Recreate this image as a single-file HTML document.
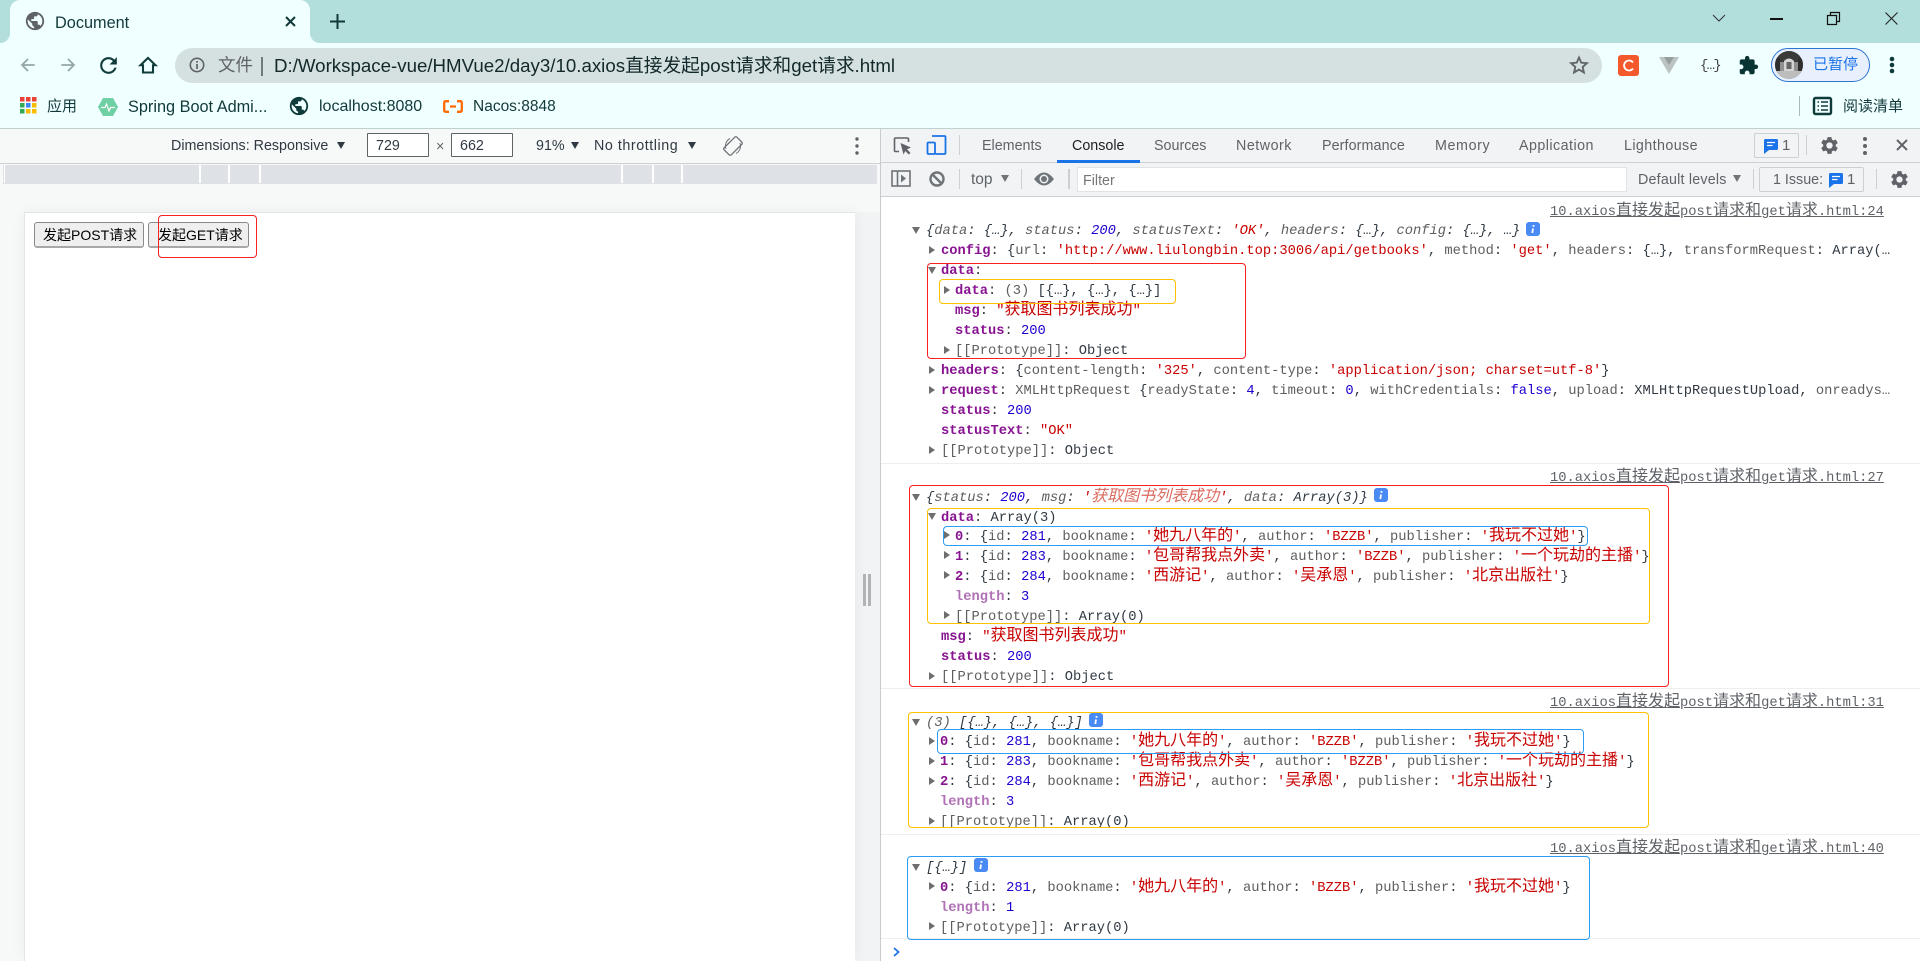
<!DOCTYPE html>
<html lang="zh"><head><meta charset="utf-8"><title>Document</title>
<style>
html,body{margin:0;padding:0;width:1920px;height:961px;overflow:hidden;background:#fff}
body{position:relative;font-family:"Liberation Sans","Noto Sans CJK SC",sans-serif;color:#202124}
.a{position:absolute}
.x{position:absolute;white-space:pre;line-height:20px}
svg{position:absolute;overflow:visible}
.u{font-size:14.3px;color:#5f6368}
.m{position:absolute;white-space:pre;line-height:20px;height:20px;margin-top:2px;font-family:"Liberation Mono","Noto Sans CJK SC",monospace;font-size:13.75px;color:#303942}
.c{font-family:"Noto Sans CJK SC",sans-serif;font-size:16px;line-height:0}
.k{color:#881391;font-weight:bold}
.l{color:#b071b6;font-weight:bold}
.g{color:#5e5e5e}
.s{color:#c80000}
.n{color:#1c00cf}
.o{color:#303942}
.h{font-style:italic}
.src{left:1550px;color:#5f6368;text-decoration:underline}
.tr,.td{position:absolute;width:0;height:0}
.tr{border-left:6px solid #6e6e6e;border-top:4.5px solid transparent;border-bottom:4.5px solid transparent}
.td{border-top:7px solid #6e6e6e;border-left:4.5px solid transparent;border-right:4.5px solid transparent}
.b{position:absolute;box-sizing:border-box;border-radius:4px;border:1.5px solid}
.red{border-color:#f92020}.yel{border-color:#ffc000}.blu{border-color:#2a9df4}
.sep{position:absolute;width:1px;background:#ccd0d2}
.div{position:absolute;left:881px;right:0;height:1px;background:#eeeeee}
</style></head><body>

<!-- tab strip -->
<div class="a" style="left:0;top:0;width:1920px;height:43px;background:#b2dfdb"></div>
<div class="a" style="left:0;top:20px;width:330px;height:23px;background:#f0ffff"></div>
<div class="a" style="left:0;top:0;width:10px;height:43px;background:#b2dfdb;border-bottom-right-radius:10px"></div>
<div class="a" style="left:310px;top:0;width:1610px;height:43px;background:#b2dfdb;border-bottom-left-radius:10px"></div>
<div class="a" style="left:10px;top:0;width:300px;height:43px;background:#f0ffff;border-radius:10px 10px 0 0"></div>
<svg style="left:24px;top:10px" width="22" height="22" viewBox="0 0 24 24"><path fill="#5f6368" d="M12 2C6.48 2 2 6.48 2 12s4.48 10 10 10 10-4.48 10-10S17.52 2 12 2zm-1 17.93c-3.95-.49-7-3.85-7-7.93 0-.62.08-1.21.21-1.79L9 15v1c0 1.1.9 2 2 2v1.93zm6.9-2.54c-.26-.81-1-1.39-1.9-1.39h-1v-3c0-.55-.45-1-1-1H8v-2h2c.55 0 1-.45 1-1V7h2c1.1 0 2-.9 2-2v-.41c2.93 1.19 5 4.06 5 7.41 0 2.08-.8 3.97-2.1 5.39z"/></svg>
<div class="x" style="left:55px;top:13px;font-size:16.3px;color:#12393a">Document</div>
<svg style="left:285px;top:16px" width="11" height="11"><path d="M1 1L10 10M10 1L1 10" stroke="#12393a" stroke-width="2"/></svg>
<svg style="left:330px;top:14px" width="15" height="15"><path d="M7.5 0V15M0 7.5H15" stroke="#12393a" stroke-width="2"/></svg>
<!-- window controls -->
<svg style="left:1712px;top:14px" width="14" height="8"><path d="M1 1L7 7L13 1" fill="none" stroke="#333" stroke-width="1"/></svg>
<div class="a" style="left:1770px;top:18px;width:13px;height:1.5px;background:#111"></div>
<svg style="left:1827px;top:12px" width="13" height="13"><path d="M.5 3.5H9.5V12.5H.5zM3.5 3.5V.5H12.5V9.5H9.5" fill="none" stroke="#111" stroke-width="1.2"/></svg>
<svg style="left:1885px;top:12px" width="13" height="13"><path d="M.5 .5L12.5 12.5M12.5 .5L.5 12.5" fill="none" stroke="#222" stroke-width="1.1"/></svg>

<!-- toolbar -->
<div class="a" style="left:0;top:43px;width:1920px;height:85px;background:#f0ffff"></div>
<div class="a" style="left:0;top:128px;width:1920px;height:1px;background:#bdd1d1"></div>
<svg style="left:19px;top:56px" width="18" height="18" viewBox="0 0 24 24"><path d="M21 12H4M12 4l-8 8 8 8" fill="none" stroke="#92a8a8" stroke-width="2.4"/></svg>
<svg style="left:59px;top:56px" width="18" height="18" viewBox="0 0 24 24"><path d="M3 12H20M12 4l8 8-8 8" fill="none" stroke="#92a8a8" stroke-width="2.4"/></svg>
<svg style="left:95.5px;top:52.5px" width="25" height="25" viewBox="0 0 24 24"><path fill="#0f3b3a" d="M17.65 6.35A7.958 7.958 0 0012 4c-4.42 0-7.99 3.58-7.99 8s3.57 8 7.99 8c3.73 0 6.84-2.55 7.73-6h-2.08A5.99 5.99 0 0112 18c-3.31 0-6-2.69-6-6s2.69-6 6-6c1.66 0 3.14.69 4.22 1.78L13 11h7V4l-2.35 2.35z"/></svg>
<svg style="left:138px;top:55px" width="20" height="20" viewBox="0 0 24 24"><path d="M12 3.5L3 12.3H6V21H18V12.3H21z" fill="none" stroke="#0f3b3a" stroke-width="2.5" stroke-linejoin="miter"/></svg>
<div class="a" style="left:175px;top:48px;width:1427px;height:35px;border-radius:18px;background:#d5e0e0"></div>
<svg style="left:189px;top:57px" width="16" height="16"><circle cx="8" cy="8" r="6.7" fill="none" stroke="#5f6368" stroke-width="1.6"/><path d="M8 7V12M8 4V5.8" stroke="#5f6368" stroke-width="1.7"/></svg>
<div class="x" style="left:218px;top:55px;font-size:17.5px;color:#5f6368">文件</div>
<div class="a" style="left:261px;top:57px;width:2px;height:19px;background:#6f7a7a"></div>
<div class="x" style="left:274px;top:56px;font-size:18.7px;color:#12282a">D:/Workspace-vue/HMVue2/day3/10.axios直接发起post请求和get请求.html</div>
<svg style="left:1569px;top:55px" width="20" height="20" viewBox="0 0 24 24"><path d="M12 3l2.7 6.2 6.8.6-5.1 4.5 1.5 6.7L12 17.5 6.1 21l1.5-6.7L2.5 9.8l6.8-.6z" fill="none" stroke="#5f6368" stroke-width="2.2"/></svg>
<div class="a" style="left:1618px;top:55px;width:21px;height:21px;border-radius:3px;background:#f4592e"></div>
<svg style="left:1622px;top:59px" width="13" height="13"><path d="M11 3.4A5 5 0 1 0 11 9.6" fill="none" stroke="#fff" stroke-width="1.8"/></svg>
<svg style="left:1659px;top:57px" width="20" height="17"><path d="M0 0H20L10 17z" fill="#bcc3c3"/><path d="M5 0H15L10 8z" fill="#979e9e"/></svg>
<div class="x" style="left:1700px;top:56px;font-size:14px;font-family:'Liberation Mono',monospace;letter-spacing:-1.8px;color:#444">{…}</div>
<svg style="left:1738px;top:55px" width="21" height="21" viewBox="0 0 24 24"><path fill="#0a3433" d="M20.5 11H19V7c0-1.1-.9-2-2-2h-4V3.5C13 2.12 11.88 1 10.5 1S8 2.12 8 3.5V5H4c-1.1 0-1.99.9-1.99 2v3.8H3.5c1.49 0 2.7 1.21 2.7 2.7s-1.21 2.7-2.7 2.7H2V20c0 1.1.9 2 2 2h3.8v-1.5c0-1.49 1.21-2.7 2.7-2.7 1.49 0 2.7 1.21 2.7 2.7V22H17c1.1 0 2-.9 2-2v-4h1.5c1.38 0 2.5-1.12 2.5-2.5S21.88 11 20.5 11z"/></svg>
<div class="a" style="left:1771px;top:48px;width:99px;height:34px;box-sizing:border-box;border:1.5px solid #2f74d0;border-radius:17px;background:#e8f0fe"></div>
<svg style="left:1775px;top:51px" width="28" height="28"><defs><clipPath id="av"><circle cx="14" cy="14" r="14"/></clipPath></defs><g clip-path="url(#av)"><rect width="28" height="28" fill="#8f8f8f"/><rect width="28" height="11" fill="#3a3a3a"/><rect x="0" y="7" width="5" height="15" fill="#2f2f2f"/><rect x="23" y="7" width="5" height="15" fill="#2f2f2f"/><path d="M9 20V10Q14 5 19 10V20z" fill="#d4d4d4"/><rect x="11.5" y="11" width="5" height="7" fill="#666"/><rect y="20" width="28" height="8" fill="#bdbdbd"/></g></svg>
<div class="x" style="left:1813px;top:55px;font-size:15px;color:#1a73e8">已暂停</div>
<svg style="left:1888px;top:55px" width="8" height="20"><circle cx="4" cy="4" r="2.3" fill="#0f3b3a"/><circle cx="4" cy="10" r="2.3" fill="#0f3b3a"/><circle cx="4" cy="16" r="2.3" fill="#0f3b3a"/></svg>

<!-- bookmarks -->
<svg style="left:20px;top:97px" width="17" height="17"><g><rect x="0" y="0" width="4.5" height="4.5" fill="#ea4335"/><rect x="6" y="0" width="4.5" height="4.5" fill="#ea4335"/><rect x="12" y="0" width="4.5" height="4.5" fill="#ea4335"/><rect x="0" y="6" width="4.5" height="4.5" fill="#34a853"/><rect x="6" y="6" width="4.5" height="4.5" fill="#4285f4"/><rect x="12" y="6" width="4.5" height="4.5" fill="#fbbc04"/><rect x="0" y="12" width="4.5" height="4.5" fill="#34a853"/><rect x="6" y="12" width="4.5" height="4.5" fill="#fbbc04"/><rect x="12" y="12" width="4.5" height="4.5" fill="#fbbc04"/></g></svg>
<div class="x" style="left:47px;top:97px;font-size:15px;color:#12393a">应用</div>
<svg style="left:98px;top:98px" width="20" height="18"><path d="M5 0H15L20 9L15 18H5L0 9z" fill="#6fd0a4"/><path d="M3 9.5H7L8.5 6L11 13L12.5 9.5H17" fill="none" stroke="#fff" stroke-width="1.2"/></svg>
<div class="x" style="left:128px;top:97px;font-size:16.3px;color:#12393a">Spring Boot Admi...</div>
<svg style="left:288px;top:95px" width="22" height="22" viewBox="0 0 24 24"><path fill="#0f3b3a" d="M12 2C6.48 2 2 6.48 2 12s4.48 10 10 10 10-4.48 10-10S17.52 2 12 2zm-1 17.93c-3.95-.49-7-3.85-7-7.93 0-.62.08-1.21.21-1.79L9 15v1c0 1.1.9 2 2 2v1.93zm6.9-2.54c-.26-.81-1-1.39-1.9-1.39h-1v-3c0-.55-.45-1-1-1H8v-2h2c.55 0 1-.45 1-1V7h2c1.1 0 2-.9 2-2v-.41c2.93 1.19 5 4.06 5 7.41 0 2.08-.8 3.97-2.1 5.39z"/></svg>
<div class="x" style="left:319px;top:97px;font-size:16px;color:#12393a">localhost:8080</div>
<svg style="left:443px;top:100px" width="20" height="13"><path d="M6 1.2H3Q1.2 1.2 1.2 3V10Q1.2 11.8 3 11.8H6M14 1.2H17Q18.800 1.2 18.800 3V10Q18.800 11.8 17 11.8H14M7 6.5H13" fill="none" stroke="#ff6a00" stroke-width="2.3"/></svg>
<div class="x" style="left:473px;top:97px;font-size:15.5px;color:#12393a">Nacos:8848</div>
<div class="a" style="left:1799px;top:96px;width:1px;height:20px;background:#a9b9b9"></div>
<svg style="left:1813px;top:97px" width="19" height="18"><rect x="1" y="1" width="17" height="16" rx="1.5" fill="none" stroke="#0f3b3a" stroke-width="2.4"/><path d="M4.5 5H6M8 5H15M4.5 9H6M8 9H15M4.5 13H6M8 13H15" stroke="#0f3b3a" stroke-width="1.6"/></svg>
<div class="x" style="left:1843px;top:97px;font-size:15px;color:#12393a">阅读清单</div>

<!-- device pane -->
<div class="a" style="left:0;top:129px;width:880px;height:832px;background:#f7f9f9"></div>
<div class="a" style="left:0;top:163px;width:880px;height:1px;background:#cdd1d1"></div>
<div class="x u" style="left:171px;top:136px;color:#303942">Dimensions: Responsive</div>
<div class="td" style="left:337px;top:142px;border-top-color:#303942"></div>
<div class="a" style="left:367px;top:133px;width:62px;height:24px;box-sizing:border-box;border:1px solid #5f6368;background:#fff;border-radius:1px"></div>
<div class="x u" style="left:376px;top:136px;color:#303942">729</div>
<div class="x u" style="left:436px;top:137px;color:#5f6368">×</div>
<div class="a" style="left:451px;top:133px;width:62px;height:24px;box-sizing:border-box;border:1px solid #5f6368;background:#fff;border-radius:1px"></div>
<div class="x u" style="left:460px;top:136px;color:#303942">662</div>
<div class="x u" style="left:536px;top:136px;color:#303942">91%</div>
<div class="td" style="left:571px;top:142px;border-top-color:#303942"></div>
<div class="x u" style="left:594px;top:136px;color:#303942;letter-spacing:.55px">No throttling</div>
<div class="td" style="left:688px;top:142px;border-top-color:#303942"></div>
<svg style="left:723px;top:136px" width="20" height="20"><g transform="rotate(45 10 10)"><rect x="5" y="1" width="10" height="18" rx="1.5" fill="none" stroke="#6e7478" stroke-width="1.3"/></g><path d="M3 13A8.500 8.500 0 0 1 7 2.500M17 7A8.500 8.500 0 0 1 13 17.500" fill="none" stroke="#6e7478" stroke-width="1"/></svg>
<svg style="left:854px;top:136px" width="6" height="20"><circle cx="3" cy="3" r="1.7" fill="#5f6368"/><circle cx="3" cy="10" r="1.7" fill="#5f6368"/><circle cx="3" cy="17" r="1.7" fill="#5f6368"/></svg>
<div class="a" style="left:3px;top:165px;width:874px;height:19px;background:#dee1e6"></div>
<div class="a" style="left:4px;top:165px;width:1px;height:18px;background:#fff"></div>
<div class="a" style="left:199px;top:165px;width:1.5px;height:18px;background:#fff"></div>
<div class="a" style="left:228px;top:165px;width:1.5px;height:18px;background:#fff"></div>
<div class="a" style="left:259px;top:165px;width:1.5px;height:18px;background:#fff"></div>
<div class="a" style="left:621px;top:165px;width:1.5px;height:18px;background:#fff"></div>
<div class="a" style="left:652px;top:165px;width:1.5px;height:18px;background:#fff"></div>
<div class="a" style="left:681px;top:165px;width:1.5px;height:18px;background:#fff"></div>
<div class="a" style="left:855px;top:212px;width:25px;height:749px;background:#f1f3f4"></div>
<div class="a" style="left:24px;top:212px;width:831px;height:749px;background:#fff;box-sizing:border-box;border-top:1px solid #e3e6e6;border-left:1px solid #e3e6e6;box-shadow:0 0 14px rgba(0,0,0,.05)"></div>
<div class="a" style="left:863px;top:574px;width:3px;height:32px;background:#b0b4b5"></div>
<div class="a" style="left:868px;top:574px;width:3px;height:32px;background:#b0b4b5"></div>
<div class="a" style="left:34px;top:222px;width:110px;height:26px;box-sizing:border-box;border:1px solid #8a8a8a;border-bottom:2px solid #a8a8a8;border-radius:3px;background:#efefef"></div>
<div class="x" style="left:43px;top:225px;font-size:14px;color:#000">发起POST请求</div>
<div class="a" style="left:148px;top:222px;width:101px;height:26px;box-sizing:border-box;border:1px solid #8a8a8a;border-bottom:2px solid #a8a8a8;border-radius:3px;background:#efefef"></div>
<div class="x" style="left:158px;top:225px;font-size:14px;color:#000">发起GET请求</div>
<div class="a" style="left:158px;top:215px;width:99px;height:43px;box-sizing:border-box;border:1px solid #f92020;border-radius:4px"></div>

<!-- devtools chrome -->
<div class="a" style="left:880px;top:129px;width:1040px;height:68px;background:#f1f3f4"></div>
<div class="a" style="left:880px;top:129px;width:1px;height:832px;background:#c6cbcb"></div>
<div class="a" style="left:881px;top:162px;width:1039px;height:1px;background:#cdd1d3"></div>
<div class="a" style="left:881px;top:196px;width:1039px;height:1px;background:#cdd1d3"></div>
<svg style="left:893px;top:136px" width="20" height="20"><path d="M6 15.5H2.5Q1.5 15.5 1.5 14.5V3Q1.5 2 2.500 2H14Q15.5 2 15.5 3V6" fill="none" stroke="#5f6368" stroke-width="1.6"/><path d="M7.5 7L18 11.5L14 13.3L17.5 17L15.8 18.5L12.3 15L10.5 18.5z" fill="#5f6368"/></svg>
<svg style="left:926px;top:135px" width="21" height="21"><path d="M6 1H18.5Q19.5 1 19.5 2V18Q19.5 19 18.5 19H9.5" fill="none" stroke="#1a73e8" stroke-width="1.8"/><rect x="1.5" y="7.5" width="7.5" height="11.5" rx="1" fill="none" stroke="#1a73e8" stroke-width="1.8"/></svg>
<div class="sep" style="left:959px;top:135px;height:20px"></div>
<div class="x u" style="left:982px;top:136px">Elements</div>
<div class="x u" style="left:1072px;top:136px;color:#202124">Console</div>
<div class="a" style="left:1057px;top:160px;width:83px;height:3px;background:#1a73e8"></div>
<div class="x u" style="left:1154px;top:136px">Sources</div>
<div class="x u" style="left:1236px;top:136px;letter-spacing:.5px">Network</div>
<div class="x u" style="left:1322px;top:136px;letter-spacing:.1px">Performance</div>
<div class="x u" style="left:1435px;top:136px;letter-spacing:.6px">Memory</div>
<div class="x u" style="left:1519px;top:136px;letter-spacing:.45px">Application</div>
<div class="x u" style="left:1624px;top:136px;letter-spacing:.4px">Lighthouse</div>
<div class="a" style="left:1754px;top:133px;width:45px;height:25px;box-sizing:border-box;border:1px solid #ccd0d2;border-radius:2px"></div>
<svg style="left:1764px;top:139px" width="14" height="15"><path d="M1.5 0H12.5Q14 0 14 1.5V9.5Q14 11 12.5 11H5L0 15V1.5Q0 0 1.5 0z" fill="#1a73e8"/><path d="M3 3.5H11M3 6.5H8.5" stroke="#fff" stroke-width="1.3"/></svg>
<div class="x u" style="left:1782px;top:136px;font-size:15px">1</div>
<div class="sep" style="left:1806px;top:135px;height:20px"></div>
<svg style="left:1818.5px;top:134.5px" width="21" height="21" viewBox="0 0 24 24"><path fill="#5f6368" d="M19.14 12.94c.04-.3.06-.61.06-.94 0-.32-.02-.64-.07-.94l2.03-1.58c.18-.14.23-.41.12-.61l-1.92-3.32c-.12-.22-.37-.29-.59-.22l-2.39.96c-.5-.38-1.03-.7-1.62-.94l-.36-2.54c-.04-.24-.24-.41-.48-.41h-3.84c-.24 0-.43.17-.47.41l-.36 2.54c-.59.24-1.13.57-1.62.94l-2.39-.96c-.22-.08-.47 0-.59.22L2.74 8.87c-.12.21-.08.47.12.61l2.03 1.58c-.05.3-.09.63-.09.94s.02.64.07.94l-2.03 1.58c-.18.14-.23.41-.12.61l1.92 3.32c.12.22.37.29.59.22l2.39-.96c.5.38 1.03.7 1.62.94l.36 2.54c.05.24.24.41.48.41h3.84c.24 0 .44-.17.47-.41l.36-2.54c.59-.24 1.13-.56 1.62-.94l2.39.96c.22.08.47 0 .59-.22l1.92-3.32c.12-.22.07-.47-.12-.61l-2.01-1.58zM12 15.6c-1.98 0-3.6-1.62-3.6-3.6s1.62-3.6 3.6-3.6 3.6 1.62 3.6 3.6-1.62 3.6-3.6 3.6z"/></svg>
<svg style="left:1862px;top:136px" width="6" height="20"><circle cx="3" cy="3" r="2" fill="#5f6368"/><circle cx="3" cy="10" r="2" fill="#5f6368"/><circle cx="3" cy="17" r="2" fill="#5f6368"/></svg>
<svg style="left:1896px;top:139px" width="12" height="12"><path d="M1 1L11 11M11 1L1 11" stroke="#5f6368" stroke-width="2"/></svg>

<svg style="left:891px;top:170px" width="20" height="18"><rect x="1" y="1" width="18" height="15" fill="none" stroke="#6e7478" stroke-width="1.6"/><path d="M6.5 1V16" stroke="#6e7478" stroke-width="1.6"/><path d="M10 4.5L15 8.5L10 12.5z" fill="#6e7478"/></svg>
<svg style="left:929px;top:171px" width="16" height="16"><circle cx="8" cy="8" r="6.5" fill="none" stroke="#6e7478" stroke-width="2.4"/><path d="M3.5 3.5L12.5 12.5" stroke="#6e7478" stroke-width="2.4"/></svg>
<div class="sep" style="left:959px;top:169px;height:20px"></div>
<div class="x u" style="left:971px;top:170px;font-size:15.5px">top</div>
<div class="td" style="left:1001px;top:175px;border-top-color:#6e7478"></div>
<div class="sep" style="left:1021px;top:169px;height:20px"></div>
<svg style="left:1034px;top:172px" width="20" height="14"><path d="M0 7Q10 -6 20 7Q10 20 0 7z" fill="#6e7478"/><circle cx="10" cy="7" r="4.5" fill="#f1f3f4"/><circle cx="10" cy="7" r="3" fill="#6e7478"/></svg>
<div class="sep" style="left:1068px;top:169px;height:20px;width:2px"></div>
<div class="a" style="left:1077px;top:167px;width:550px;height:25px;box-sizing:border-box;background:#fff;border:1px solid #e1e3e4"></div>
<div class="x u" style="left:1083px;top:171px;color:#757575">Filter</div>
<div class="x u" style="left:1638px;top:170px;letter-spacing:.2px">Default levels</div>
<div class="td" style="left:1733px;top:175px;border-top-color:#6e7478"></div>
<div class="sep" style="left:1753px;top:169px;height:20px"></div>
<div class="a" style="left:1759px;top:167px;width:105px;height:25px;box-sizing:border-box;border:1px solid #ccd0d2;border-radius:2px"></div>
<div class="x u" style="left:1773px;top:170px">1 Issue:</div>
<svg style="left:1829px;top:173px" width="14" height="15"><path d="M1.5 0H12.5Q14 0 14 1.5V9.5Q14 11 12.5 11H5L0 15V1.5Q0 0 1.5 0z" fill="#1a73e8"/><path d="M3 3.5H11M3 6.5H8.5" stroke="#fff" stroke-width="1.3"/></svg>
<div class="x u" style="left:1847px;top:170px;font-size:15px">1</div>
<div class="sep" style="left:1876px;top:169px;height:20px"></div>
<svg style="left:1889px;top:168.5px" width="21" height="21" viewBox="0 0 24 24"><path fill="#5f6368" d="M19.14 12.94c.04-.3.06-.61.06-.94 0-.32-.02-.64-.07-.94l2.03-1.58c.18-.14.23-.41.12-.61l-1.92-3.32c-.12-.22-.37-.29-.59-.22l-2.39.96c-.5-.38-1.03-.7-1.62-.94l-.36-2.54c-.04-.24-.24-.41-.48-.41h-3.84c-.24 0-.43.17-.47.41l-.36 2.54c-.59.24-1.13.57-1.62.94l-2.39-.96c-.22-.08-.47 0-.59.22L2.74 8.87c-.12.21-.08.47.12.61l2.03 1.58c-.05.3-.09.63-.09.94s.02.64.07.94l-2.03 1.58c-.18.14-.23.41-.12.61l1.92 3.32c.12.22.37.29.59.22l2.39-.96c.5.38 1.03.7 1.62.94l.36 2.54c.05.24.24.41.48.41h3.84c.24 0 .44-.17.47-.41l.36-2.54c.59-.24 1.13-.56 1.62-.94l2.39.96c.22.08.47 0 .59-.22l1.92-3.32c.12-.22.07-.47-.12-.61l-2.01-1.58zM12 15.6c-1.98 0-3.6-1.62-3.6-3.6s1.62-3.6 3.6-3.6 3.6 1.62 3.6 3.6-1.62 3.6-3.6 3.6z"/></svg>

<!-- console group 1 -->
<div class="m src" style="top:201px">10.axios<span class="c">直接发起</span>post<span class="c">请求和</span>get<span class="c">请求</span>.html:24</div>
<div class="td" style="left:912px;top:227px"></div>
<div class="m h" style="left:926px;top:220px">{<span class="g">data</span>: {…}, <span class="g">status</span>: <span class="n">200</span>, <span class="g">statusText</span>: <span class="s">'OK'</span>, <span class="g">headers</span>: {…}, <span class="g">config</span>: {…}, …}</div>
<svg style="left:1526px;top:222px" width="14" height="14"><rect width="14" height="14" rx="3" fill="#4a8af4"/><path d="M7.5 3V4.8M7 6.5L6.3 11" stroke="#fff" stroke-width="1.8"/></svg>
<div class="tr" style="left:929px;top:246px"></div>
<div class="m" style="left:941px;top:240px"><span class="k">config</span>: {<span class="g">url</span>: <span class="s">'http://www.liulongbin.top:3006/api/getbooks'</span>, <span class="g">method</span>: <span class="s">'get'</span>, <span class="g">headers</span>: {…}, <span class="g">transformRequest</span>: Array(…</div>
<div class="td" style="left:928px;top:267px"></div>
<div class="m" style="left:941px;top:260px"><span class="k">data</span>:</div>
<div class="tr" style="left:944px;top:286px"></div>
<div class="m" style="left:955px;top:280px"><span class="k">data</span>: <span class="g">(3)</span> [{…}, {…}, {…}]</div>
<div class="m" style="left:955px;top:300px"><span class="k">msg</span>: <span class="s">"<span class="c">获取图书列表成功</span>"</span></div>
<div class="m" style="left:955px;top:320px"><span class="k">status</span>: <span class="n">200</span></div>
<div class="tr" style="left:944px;top:346px"></div>
<div class="m" style="left:955px;top:340px"><span class="g">[[Prototype]]</span>: Object</div>
<div class="tr" style="left:929px;top:366px"></div>
<div class="m" style="left:941px;top:360px"><span class="k">headers</span>: {<span class="g">content-length</span>: <span class="s">'325'</span>, <span class="g">content-type</span>: <span class="s">'application/json; charset=utf-8'</span>}</div>
<div class="tr" style="left:929px;top:386px"></div>
<div class="m" style="left:941px;top:380px"><span class="k">request</span>: <span class="g">XMLHttpRequest</span> {<span class="g">readyState</span>: <span class="n">4</span>, <span class="g">timeout</span>: <span class="n">0</span>, <span class="g">withCredentials</span>: <span class="n">false</span>, <span class="g">upload</span>: XMLHttpRequestUpload, <span class="g">onreadys…</span></div>
<div class="m" style="left:941px;top:400px"><span class="k">status</span>: <span class="n">200</span></div>
<div class="m" style="left:941px;top:420px"><span class="k">statusText</span>: <span class="s">"OK"</span></div>
<div class="tr" style="left:929px;top:446px"></div>
<div class="m" style="left:941px;top:440px"><span class="g">[[Prototype]]</span>: Object</div>
<div class="div" style="top:463px"></div>

<!-- console group 2 -->
<div class="m src" style="top:467px">10.axios<span class="c">直接发起</span>post<span class="c">请求和</span>get<span class="c">请求</span>.html:27</div>
<div class="td" style="left:912px;top:494px"></div>
<div class="m h" style="left:926px;top:487px">{<span class="g">status</span>: <span class="n">200</span>, <span class="g">msg</span>: <span class="s">'<span class="c" style="color:#d96a5f">获取图书列表成功</span>'</span>, <span class="g">data</span>: Array(3)}</div>
<svg style="left:1374px;top:488px" width="14" height="14"><rect width="14" height="14" rx="3" fill="#4a8af4"/><path d="M7.5 3V4.8M7 6.5L6.3 11" stroke="#fff" stroke-width="1.8"/></svg>
<div class="td" style="left:928px;top:513px"></div>
<div class="m" style="left:941px;top:507px"><span class="k">data</span>: Array(3)</div>
<div class="tr" style="left:944px;top:531px"></div>
<div class="m" style="left:955px;top:526px"><span class="k">0</span>: {<span class="g">id</span>: <span class="n">281</span>, <span class="g">bookname</span>: <span class="s">'<span class="c">她九八年的</span>'</span>, <span class="g">author</span>: <span class="s">'BZZB'</span>, <span class="g">publisher</span>: <span class="s">'<span class="c">我玩不过她</span>'</span>}</div>
<div class="tr" style="left:944px;top:551px"></div>
<div class="m" style="left:955px;top:546px"><span class="k">1</span>: {<span class="g">id</span>: <span class="n">283</span>, <span class="g">bookname</span>: <span class="s">'<span class="c">包哥帮我点外卖</span>'</span>, <span class="g">author</span>: <span class="s">'BZZB'</span>, <span class="g">publisher</span>: <span class="s">'<span class="c">一个玩劫的主播</span>'</span>}</div>
<div class="tr" style="left:944px;top:571px"></div>
<div class="m" style="left:955px;top:566px"><span class="k">2</span>: {<span class="g">id</span>: <span class="n">284</span>, <span class="g">bookname</span>: <span class="s">'<span class="c">西游记</span>'</span>, <span class="g">author</span>: <span class="s">'<span class="c">吴承恩</span>'</span>, <span class="g">publisher</span>: <span class="s">'<span class="c">北京出版社</span>'</span>}</div>
<div class="m" style="left:955px;top:586px"><span class="l">length</span>: <span class="n">3</span></div>
<div class="tr" style="left:944px;top:611px"></div>
<div class="m" style="left:955px;top:606px"><span class="g">[[Prototype]]</span>: Array(0)</div>
<div class="m" style="left:941px;top:626px"><span class="k">msg</span>: <span class="s">"<span class="c">获取图书列表成功</span>"</span></div>
<div class="m" style="left:941px;top:646px"><span class="k">status</span>: <span class="n">200</span></div>
<div class="tr" style="left:929px;top:672px"></div>
<div class="m" style="left:941px;top:666px"><span class="g">[[Prototype]]</span>: Object</div>
<div class="div" style="top:688px"></div>

<!-- console group 3 -->
<div class="m src" style="top:692px">10.axios<span class="c">直接发起</span>post<span class="c">请求和</span>get<span class="c">请求</span>.html:31</div>
<div class="td" style="left:912px;top:719px"></div>
<div class="m h" style="left:926px;top:712px"><span class="g">(3)</span> [{…}, {…}, {…}]</div>
<svg style="left:1089px;top:713px" width="14" height="14"><rect width="14" height="14" rx="3" fill="#4a8af4"/><path d="M7.5 3V4.8M7 6.5L6.3 11" stroke="#fff" stroke-width="1.8"/></svg>
<div class="tr" style="left:929px;top:737px"></div>
<div class="m" style="left:940px;top:731px"><span class="k">0</span>: {<span class="g">id</span>: <span class="n">281</span>, <span class="g">bookname</span>: <span class="s">'<span class="c">她九八年的</span>'</span>, <span class="g">author</span>: <span class="s">'BZZB'</span>, <span class="g">publisher</span>: <span class="s">'<span class="c">我玩不过她</span>'</span>}</div>
<div class="tr" style="left:929px;top:757px"></div>
<div class="m" style="left:940px;top:751px"><span class="k">1</span>: {<span class="g">id</span>: <span class="n">283</span>, <span class="g">bookname</span>: <span class="s">'<span class="c">包哥帮我点外卖</span>'</span>, <span class="g">author</span>: <span class="s">'BZZB'</span>, <span class="g">publisher</span>: <span class="s">'<span class="c">一个玩劫的主播</span>'</span>}</div>
<div class="tr" style="left:929px;top:777px"></div>
<div class="m" style="left:940px;top:771px"><span class="k">2</span>: {<span class="g">id</span>: <span class="n">284</span>, <span class="g">bookname</span>: <span class="s">'<span class="c">西游记</span>'</span>, <span class="g">author</span>: <span class="s">'<span class="c">吴承恩</span>'</span>, <span class="g">publisher</span>: <span class="s">'<span class="c">北京出版社</span>'</span>}</div>
<div class="m" style="left:940px;top:791px"><span class="l">length</span>: <span class="n">3</span></div>
<div class="tr" style="left:929px;top:817px"></div>
<div class="m" style="left:940px;top:811px"><span class="g">[[Prototype]]</span>: Array(0)</div>
<div class="div" style="top:834px"></div>

<!-- console group 4 -->
<div class="m src" style="top:838px">10.axios<span class="c">直接发起</span>post<span class="c">请求和</span>get<span class="c">请求</span>.html:40</div>
<div class="td" style="left:912px;top:864px"></div>
<div class="m h" style="left:926px;top:857px">[{…}]</div>
<svg style="left:974px;top:858px" width="14" height="14"><rect width="14" height="14" rx="3" fill="#4a8af4"/><path d="M7.5 3V4.8M7 6.5L6.3 11" stroke="#fff" stroke-width="1.8"/></svg>
<div class="tr" style="left:929px;top:882px"></div>
<div class="m" style="left:940px;top:877px"><span class="k">0</span>: {<span class="g">id</span>: <span class="n">281</span>, <span class="g">bookname</span>: <span class="s">'<span class="c">她九八年的</span>'</span>, <span class="g">author</span>: <span class="s">'BZZB'</span>, <span class="g">publisher</span>: <span class="s">'<span class="c">我玩不过她</span>'</span>}</div>
<div class="m" style="left:940px;top:897px"><span class="l">length</span>: <span class="n">1</span></div>
<div class="tr" style="left:929px;top:922px"></div>
<div class="m" style="left:940px;top:917px"><span class="g">[[Prototype]]</span>: Array(0)</div>
<div class="div" style="top:938px"></div>
<svg style="left:893px;top:947px" width="7" height="10"><path d="M1 1L5.5 5L1 9" fill="none" stroke="#1a73e8" stroke-width="1.8"/></svg>

<!-- annotation boxes -->
<div class="b red" style="left:927px;top:263px;width:319px;height:96px"></div>
<div class="b yel" style="left:939px;top:279px;width:237px;height:25px"></div>
<div class="b red" style="left:909px;top:485px;width:760px;height:202px"></div>
<div class="b yel" style="left:927px;top:508px;width:723px;height:116px"></div>
<div class="b blu" style="left:943px;top:526px;width:645px;height:20px"></div>
<div class="b yel" style="left:908px;top:712px;width:741px;height:116px"></div>
<div class="b blu" style="left:937px;top:729px;width:647px;height:25px"></div>
<div class="b blu" style="left:907px;top:856px;width:683px;height:84px"></div>
</body></html>
